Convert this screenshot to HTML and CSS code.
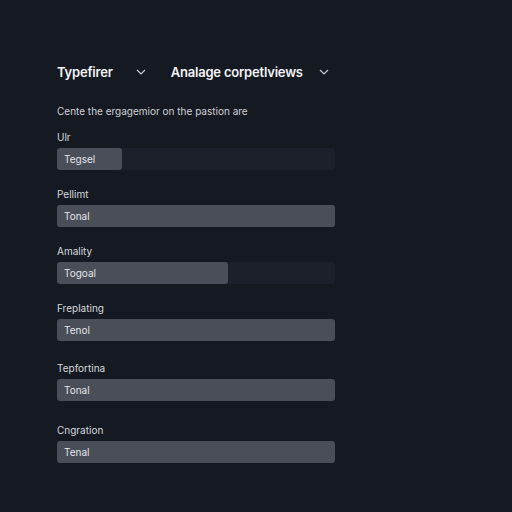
FILE: index.html
```html
<!DOCTYPE html>
<html>
<head>
<meta charset="utf-8">
<link rel="stylesheet" href="styles.css">
</head>
<body>
<div class="page">
  <div class="header">
    <div class="select"><span class="title">Typefirer</span><svg class="chev" width="10" height="6" viewBox="0 0 10 6"><path d="M1 1l4 4 4-4" fill="none" stroke="#c9ccd2" stroke-width="1.2"/></svg></div>
    <div class="select second"><span class="title">Analage corpetlviews</span><svg class="chev" width="10" height="6" viewBox="0 0 10 6"><path d="M1 1l4 4 4-4" fill="none" stroke="#c9ccd2" stroke-width="1.2"/></svg></div>
  </div>
  <p class="subtitle">Cente the ergagemior on the pastion are</p>
  <div class="fields">
    <div class="field"><div class="label">Ulr</div><div class="track"><div class="fill" style="width:65px">Tegsel</div></div></div>
    <div class="field"><div class="label">Pellimt</div><div class="track"><div class="fill" style="width:100%">Tonal</div></div></div>
    <div class="field"><div class="label">Amality</div><div class="track"><div class="fill" style="width:171px">Togoal</div></div></div>
    <div class="field"><div class="label">Freplating</div><div class="track"><div class="fill" style="width:100%">Tenol</div></div></div>
    <div class="field gap2"><div class="label">Tepfortina</div><div class="track"><div class="fill" style="width:100%">Tonal</div></div></div>
    <div class="field gap3"><div class="label">Cngration</div><div class="track"><div class="fill" style="width:100%">Tenal</div></div></div>
  </div>
</div>
</body>
</html>
```
FILE: styles.css
```css
html, body {
  margin: 0;
  padding: 0;
  background: #151922;
}
body {
  width: 512px;
  height: 512px;
  overflow: hidden;
  font-family: Inter, "Liberation Sans", sans-serif;
  color: #e6e8ec;
}
.page {
  padding: 62px 0 0 57px;
  width: 278px;
}
.header {
  display: flex;
  align-items: center;
  height: 20px;
  white-space: nowrap;
}
.select {
  display: flex;
  align-items: center;
}
.title {
  font-size: 13px;
  font-weight: 600;
  color: #f2f3f5;
  letter-spacing: -0.2px;
}
.chev {
  margin-left: 23px;
}
.select.second {
  margin-left: 25px;
}
.select.second .chev {
  margin-left: 16px;
}
.subtitle {
  margin: 22px 0 0 0;
  font-size: 10px;
  color: #cfd2d8;
  line-height: 14px;
  white-space: nowrap;
}
.fields {
  margin-top: 12px;
  display: flex;
  flex-direction: column;
}
.field {
  margin-bottom: 17px;
}
.field.gap2 {
  margin-top: 3px;
}
.field.gap3 {
  margin-top: 5px;
}
.label {
  font-size: 10px;
  color: #d6d9de;
  line-height: 14px;
  margin-bottom: 4px;
}
.track {
  height: 22px;
  background: #1b202a;
  border-radius: 3px;
  display: flex;
}
.fill {
  height: 22px;
  background: #4a4e58;
  border-radius: 3px;
  box-sizing: border-box;
  padding-left: 7px;
  font-size: 10px;
  line-height: 22px;
  color: #e4e6ea;
}
```
